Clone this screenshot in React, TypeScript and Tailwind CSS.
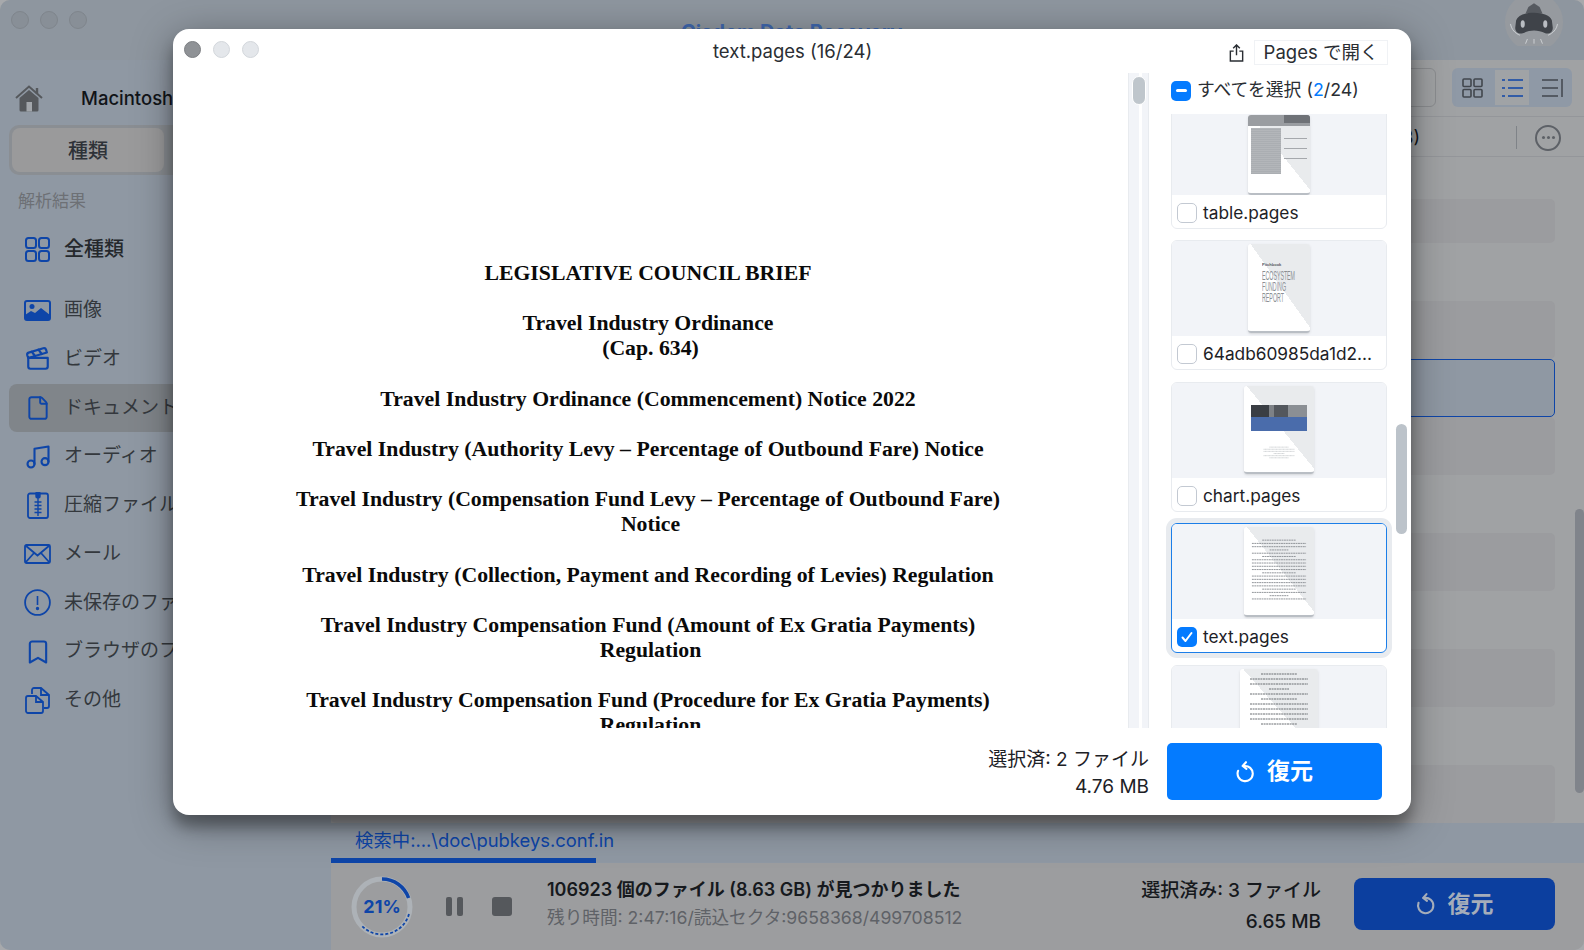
import React from 'react';
import { Clapperboard, File, Bookmark, Music } from 'lucide-react';

const sans = 'font-["Inter","Noto_Sans_CJK_JP",sans-serif]';
const iconCls = 'text-[#0e45a8]';

const HomeIcon = () => (
  <svg viewBox="0 0 28 27" className="w-[28px] h-[27px]">
    <path d="M1 13 14 1.5 27 13" fill="none" stroke="#55585c" strokeWidth="2" />
    <path d="M22 3v6" stroke="#55585c" strokeWidth="2.4" />
    <path d="M4.5 13 14 5l9.500 8v12a1.500 1.500 0 0 1-1.500 1.500H6A1.500 1.500 0 0 1 4.500 25Z" fill="#55585c" />
    <rect x="11.500" y="17" width="5.500" height="9.500" fill="#a2a6ab" />
  </svg>
);

const GridIcon = () => (
  <svg viewBox="0 0 25 25" className={`w-[25px] h-[25px] ${iconCls}`} fill="none" stroke="currentColor" strokeWidth="2">
    <rect x="1" y="1" width="10" height="10" rx="2.500" />
    <rect x="14" y="1" width="10" height="10" rx="2.500" />
    <rect x="1" y="14" width="10" height="10" rx="2.500" />
    <rect x="14" y="14" width="10" height="10" rx="2.500" />
  </svg>
);

const ImageIcon = () => (
  <svg viewBox="0 0 27 21" className={`w-[27px] h-[21px] ${iconCls}`}>
    <rect x="1" y="1" width="25" height="19" rx="2" fill="none" stroke="currentColor" strokeWidth="2" />
    <circle cx="8" cy="6.500" r="2.500" fill="currentColor" />
    <path d="M1 19v-4l6-4 4 2 6-5 9 7v5H1Z" fill="currentColor" />
  </svg>
);

const ZipIcon = () => (
  <svg viewBox="0 0 22 27" className={`w-[22px] h-[27px] ${iconCls}`} fill="none" stroke="currentColor" strokeWidth="1.800">
    <rect x="1" y="1.500" width="20" height="24.500" rx="2" />
    <rect x="9.200" y="0.500" width="3.600" height="5" rx="1" fill="currentColor" />
    <path d="M11 6v18M7.500 10h7M7.500 13.500h7M7.500 17h7M7.500 20.500h7" strokeWidth="1.400" />
  </svg>
);

const MailIcon = () => (
  <svg viewBox="0 0 27 20" className={`w-[27px] h-[20px] ${iconCls}`} fill="none" stroke="currentColor" strokeWidth="1.800">
    <rect x="1" y="1" width="25" height="18" rx="1.500" />
    <path d="m1.500 1.500 12 10 12-10M1.500 18.500l8.500-9.500M25.500 18.500 17 9" />
  </svg>
);

const AlertIcon = () => (
  <svg viewBox="0 0 27 27" className={`w-[27px] h-[27px] ${iconCls}`} fill="none" stroke="currentColor" strokeWidth="1.800">
    <circle cx="13.500" cy="13.500" r="12.400" />
    <path d="M13.500 7v9" strokeWidth="1.600" />
    <circle cx="13.500" cy="19.500" r="0.800" fill="currentColor" />
  </svg>
);

const OtherIcon = () => (
  <svg viewBox="0 0 25 27" className={`w-[25px] h-[27px] ${iconCls}`} fill="none" stroke="currentColor" strokeWidth="1.800">
    <path d="M7 7V3a2 2 0 0 1 2-2h7l8 7v11a2 2 0 0 1-2 2h-3" />
    <path d="M1 11a2 2 0 0 1 2-2h8l7 6v9a2 2 0 0 1-2 2H3a2 2 0 0 1-2-2Z" />
    <path d="M16 1v7h8M11 9v6h7" />
  </svg>
);

const UndoIcon = ({ className }: { className: string }) => (
  <svg viewBox="0 0 20 23" className={className} fill="none" stroke="currentColor" strokeWidth="2.200" strokeLinecap="round" strokeLinejoin="round">
    <path d="M8.500 5.200a8 8 0 1 1-6.300 5" />
    <path d="M10.500 1.200 7 5.200l4 3" />
  </svg>
);

const ShareIcon = () => (
  <svg viewBox="0 0 15 19" className="w-[15px] h-[18px] text-[#2a2e33]" fill="none" stroke="currentColor" strokeWidth="1.500">
    <path d="M4.500 7.500H1v10.500h13V7.500h-3.500M7.500 12V1.500M4 4.500l3.500-3.500 3.500 3.500" />
  </svg>
);

const Robot = () => (
  <svg viewBox="0 0 66 46" className="w-[62px] h-[46px]">
    <circle cx="33" cy="22" r="31" fill="#969a9f" />
    <path d="M24 13l3-7 6-4 6 4 3 7Z" fill="#565a60" />
    <path d="M14 20c2-5 9-8 19-8s17 3 19 8l1 8c0 5-4 7-8 6-4-2-8-3-12-3s-8 1-12 3c-4 1-8-1-8-6Z" fill="#3f4349" />
    <ellipse cx="21" cy="24" rx="2.200" ry="4" fill="#b9bdc2" />
    <ellipse cx="45" cy="24" rx="2.200" ry="4" fill="#b9bdc2" />
    <path d="M8 24c1 6 5 10 10 12M58 24c-1 6-5 10-10 12M26 40l-2 5M33 40v5M40 40l2 5" stroke="#cfd2d5" strokeWidth="1" fill="none" />
  </svg>
);

const navItems = [
  { icon: <ImageIcon />, label: '画像' },
  { icon: <Clapperboard className={`w-[26px] h-[26px] ${iconCls}`} strokeWidth={2} />, label: 'ビデオ' },
  { icon: <File className={`w-[26px] h-[28px] ${iconCls}`} strokeWidth={1.800} />, label: 'ドキュメント', active: true },
  { icon: <Music className={`w-[28px] h-[28px] ${iconCls}`} strokeWidth={1.800} />, label: 'オーディオ' },
  { icon: <ZipIcon />, label: '圧縮ファイル' },
  { icon: <MailIcon />, label: 'メール' },
  { icon: <AlertIcon />, label: '未保存のファイル' },
  { icon: <Bookmark className={`w-[28px] h-[28px] ${iconCls}`} strokeWidth={1.800} />, label: 'ブラウザのファイル' },
  { icon: <OtherIcon />, label: 'その他' },
];

const Sidebar = () => (
  <div className="w-[331px] shrink-0 bg-[#8f98a3] pl-[9px] flex flex-col overflow-hidden">
    <div className="flex items-center h-[36px] mt-[20px] pl-[6px] gap-[38px]">
      <HomeIcon />
      <span className="text-[18.500px] font-medium text-[#111418] leading-none whitespace-nowrap">Macintosh HD</span>
    </div>
    <div className="mt-[9px] w-[310px] h-[50px] rounded-[10px] bg-[#8a8e93] p-[3px] flex">
      <div className="w-[152px] pt-[1px] rounded-[8px] bg-[#9a9a9b] flex items-center justify-center text-[20px] font-medium text-[#2e3238]">種類</div>
    </div>
    <div className="mt-[14px] pl-[9px] text-[17px] leading-[24px] text-[#6d7075]">解析結果</div>
    <div className="mt-[12px] h-[48px] flex items-center pl-[16px] gap-[14px] text-[20px] font-medium text-[#25282c]">
      <GridIcon />
      <span>全種類</span>
    </div>
    <div className="mt-[13px] flex flex-col w-[310px]">
      {navItems.map((item) => (
        <div
          key={item.label}
          className={`h-[48.750px] flex items-center rounded-[8px] text-[19px] text-[#34383d] whitespace-nowrap ${item.active ? 'bg-[#80858a]' : ''}`}
        >
          <div className="w-[55px] flex justify-center pl-[2px]">{item.icon}</div>
          <span>{item.label}</span>
        </div>
      ))}
    </div>
  </div>
);

const viewGroup = (
  <div className="flex items-center w-[120px] h-[39px] bg-[#8f99a6] rounded-[6px] p-[2px]">
    <div className="w-[41px] flex pl-[8px]">
      <svg viewBox="0 0 21 20" className="w-[21px] h-[20px]" fill="none" stroke="#41464d" strokeWidth="1.600">
        <rect x="1" y="1" width="8" height="7.500" rx="1" />
        <rect x="12" y="1" width="8" height="7.500" rx="1" />
        <rect x="1" y="11.500" width="8" height="7.500" rx="1" />
        <rect x="12" y="11.500" width="8" height="7.500" rx="1" />
      </svg>
    </div>
    <div className="w-[34px] h-[35px] bg-[#a0a3a6] flex items-center justify-center">
      <svg viewBox="0 0 21 20" className="w-[21px] h-[20px]" fill="none" stroke="#0e45a8" strokeWidth="1.600">
        <path d="M0 2h3M6 2h15M0 10h3M6 10h15M0 18h3M6 18h15" />
      </svg>
    </div>
    <div className="w-[41px] flex pl-[13px]">
      <svg viewBox="0 0 21 20" className="w-[21px] h-[20px]" fill="none" stroke="#41464d" strokeWidth="1.500">
        <path d="M0 2h16M0 10h16M0 18h16M20 1v18" />
      </svg>
    </div>
  </div>
);

// list rows behind the dialog, only their right ends can be seen
const rows = [
  { h: 'h-[44px]', cls: 'bg-[#9b9c9f]' },
  { h: 'h-[58px]', cls: '' },
  { h: 'h-[58px]', cls: 'bg-[#9b9c9f]' },
  { h: 'h-[58px]', cls: 'bg-[#8f98a3] border border-[#0e45a8]' },
  { h: 'h-[58px]', cls: 'bg-[#9b9c9f]' },
  { h: 'h-[58px]', cls: '' },
  { h: 'h-[58px]', cls: 'bg-[#9b9c9f]' },
  { h: 'h-[58px]', cls: '' },
  { h: 'h-[58px]', cls: 'bg-[#9b9c9f]' },
  { h: 'h-[58px]', cls: '' },
  { h: 'h-[58px]', cls: 'bg-[#9b9c9f]' },
];

const Progress = () => (
  <div className="relative w-[66px] h-[66px] flex items-center justify-center">
    <svg viewBox="0 0 66 66" className="absolute inset-0 w-[66px] h-[66px]" fill="none">
      <circle cx="33" cy="33" r="28" stroke="#adb2b7" strokeWidth="5" />
      <path d="M33 5a28 28 0 0 1 26.600 19" stroke="#0e45a8" strokeWidth="3.500" />
      <path d="M60 40a28 28 0 0 1-47 12" stroke="#0e45a8" strokeWidth="1.800" strokeDasharray="3 2" />
    </svg>
    <span className="relative text-[18px] font-bold text-[#0e45a8]">21%</span>
  </div>
);

const Main = () => (
  <div className="flex-1 min-w-0 flex flex-col relative">
    <div className="h-[56px] flex justify-end pt-[8px] pr-[12px] gap-[16px] shrink-0">
      <div className="w-[200px] h-[39px] rounded-[6px] border border-[#8b8d90]" />
      {viewGroup}
    </div>
    <div className="h-[41px] pt-[2px] border-y border-[#94969a] flex items-center justify-end pr-[23px] shrink-0">
      <span className="text-[18px] text-[#111418] mr-[96px]">(3)</span>
      <div className="w-px h-[23px] bg-[#7f8388] mr-[18px]" />
      <div className="w-[26px] h-[26px] rounded-full border-2 border-[#5d6167] flex items-center justify-center gap-[2px]">
        <span className="w-[3px] h-[3px] bg-[#5d6167] rounded-full" />
        <span className="w-[3px] h-[3px] bg-[#5d6167] rounded-full" />
        <span className="w-[3px] h-[3px] bg-[#5d6167] rounded-full" />
      </div>
    </div>
    <div className="flex-1 pr-[29px] flex flex-col overflow-hidden">
      <div className="h-[42px] shrink-0" />
      {rows.map((r, i) => (
        <div key={i} className={`${r.h} ${r.cls} rounded-[5px] shrink-0`} />
      ))}
    </div>
    <div className="h-[40px] bg-[#8f98a3] shrink-0 flex items-end relative">
      <div className="absolute left-[24px] top-[5px] text-[18.400px] text-[#0e45a8] leading-[24px] whitespace-nowrap">検索中:...\doc\pubkeys.conf.in</div>
      <div className="w-[265px] h-[5px] bg-[#0e45a8]" />
    </div>
    <div className="h-[87px] bg-[#9c9d9f] shrink-0 flex items-center pl-[18px] pr-[29px]">
      <Progress />
      <div className="ml-[31px] flex gap-[5px]">
        <span className="w-[6px] h-[19px] rounded-[2px] bg-[#55585c]" />
        <span className="w-[6px] h-[19px] rounded-[2px] bg-[#55585c]" />
      </div>
      <span className="ml-[29px] w-[20px] h-[19px] rounded-[3px] bg-[#55585c]" />
      <div className="ml-[35px] -mt-[5px] flex flex-col gap-[6px]">
        <span className="text-[18px] leading-[22px] font-semibold text-[#16191d] whitespace-nowrap">106923 個のファイル (8.63 GB) が見つかりました</span>
        <span className="text-[17.650px] leading-[22px] text-[#5f6267] whitespace-nowrap">残り時間: 2:47:16/読込セクタ:9658368/499708512</span>
      </div>
      <div className="ml-auto flex flex-col items-end gap-[9px] mr-[33px]">
        <span className="text-[19px] leading-[22px] font-medium text-[#16191d] whitespace-nowrap">選択済み: 3 ファイル</span>
        <span className="text-[19px] leading-[22px] font-medium text-[#16191d]">6.65 MB</span>
      </div>
      <div className="w-[201px] h-[52px] -mt-[5px] rounded-[8px] bg-[#0c3f9f] flex items-center justify-center gap-[12px] text-[#a5adba]">
        <UndoIcon className="w-[20px] h-[22px]" />
        <span className="text-[23px] font-semibold">復元</span>
      </div>
    </div>
    <div className="absolute right-0 top-[449px] w-[9px] h-[284px] rounded-full bg-[#80848b]" />
  </div>
);

const docParagraphs = [
  ['LEGISLATIVE COUNCIL BRIEF'],
  ['Travel Industry Ordinance', '(Cap. 634)'],
  ['Travel Industry Ordinance (Commencement) Notice 2022'],
  ['Travel Industry (Authority Levy – Percentage of Outbound Fare) Notice'],
  ['Travel Industry (Compensation Fund Levy – Percentage of Outbound Fare)', 'Notice'],
  ['Travel Industry (Collection, Payment and Recording of Levies) Regulation'],
  ['Travel Industry Compensation Fund (Amount of Ex Gratia Payments)', 'Regulation'],
  ['Travel Industry Compensation Fund (Procedure for Ex Gratia Payments)', 'Regulation'],
];

const pageCls =
  'bg-[linear-gradient(to_top_right,#ffffff_52%,#e9ebed_52%)] border-b-2 border-[#b9bec4] rounded-[3px] shadow-sm overflow-hidden';

const TextLines = ({ count, gap, color }: { count: number; gap: number; color: string }) => (
  <svg viewBox={`0 0 60 ${count * gap}`} className="w-full" style={{ height: count * gap }}>
    {Array.from({ length: count }).map((_, i) => {
      const inset = i % 5 === 0 ? 12 : i % 7 === 3 ? 20 : 1;
      return <line key={i} x1={inset} x2={60 - inset} y1={i * gap + 1} y2={i * gap + 1} stroke={color} strokeWidth="1" strokeDasharray="2 0.600" />;
    })}
  </svg>
);

const TableThumb = () => (
  <div className={`w-[62px] h-[80px] ${pageCls} -mt-[2px]`}>
    <div className="h-[11px] bg-[#9a9da1] flex justify-end">
      <div className="w-[26px] h-[8px] bg-[#6f7277]" />
    </div>
    <div className="flex gap-[3px] px-[3px] pt-[2px]">
      <div className="w-[30px] h-[46px] bg-[repeating-linear-gradient(0deg,#8d9196_0px,#c8cbce_1px,#9ea1a5_2px)]" />
      <div className="flex-1 flex flex-col gap-[9px] pt-[10px]">
        <div className="h-px bg-[#a5a8ac]" />
        <div className="h-px bg-[#a5a8ac]" />
        <div className="h-px bg-[#a5a8ac]" />
      </div>
    </div>
  </div>
);

const FundingThumb = () => (
  <div className={`w-[62px] h-[89px] ${pageCls} pl-[14px] pt-[17px]`}>
    <svg viewBox="0 0 40 46" className="w-[40px] h-[46px]" fill="#8b8f94" fontFamily="Liberation Sans" fontSize="12">
      <text x="0" y="5" fontSize="4" fontWeight="bold" fill="#55595e">Pitchbook</text>
      <text x="0" y="19" textLength="33" lengthAdjust="spacingAndGlyphs">ECOSYSTEM</text>
      <text x="0" y="30" textLength="24" lengthAdjust="spacingAndGlyphs">FUNDING</text>
      <text x="0" y="41" textLength="22" lengthAdjust="spacingAndGlyphs">REPORT</text>
    </svg>
  </div>
);

const ChartThumb = () => (
  <div className={`w-[70px] h-[88px] ${pageCls} pt-[19px] px-[7px]`}>
    <div className="h-[12px] flex">
      <div className="w-[18px] bg-[#3a3e44]" />
      <div className="w-[5px] bg-[#7d8186]" />
      <div className="w-[14px] bg-[#53575d]" />
      <div className="flex-1 bg-[#8b8f94]" />
    </div>
    <div className="h-[14px] bg-[#4a6cab]" />
    <div className="mt-[10px] px-[12px]">
      <TextLines count={6} gap={4} color="#a9adb2" />
    </div>
  </div>
);

const cards = [
  { name: 'table.pages', thumb: <TableThumb />, align: 'items-end' },
  { name: '64adb60985da1d2...', thumb: <FundingThumb />, align: 'items-center' },
  { name: 'chart.pages', thumb: <ChartThumb />, align: 'items-center' },
  {
    name: 'text.pages',
    selected: true,
    align: 'items-center',
    thumb: (
      <div className={`w-[70px] h-[90px] ${pageCls} px-[7px] pt-[10px]`}>
        <TextLines count={19} gap={3.5} color="#8a8e93" />
      </div>
    ),
  },
  {
    name: 'other.pages',
    align: 'items-start',
    thumb: (
      <div className={`w-[78px] h-[90px] mt-[3px] ${pageCls} px-[6px] pt-[4px]`}>
        <TextLines count={16} gap={5} color="#6a6e73" />
      </div>
    ),
  },
];

const Card = ({ name, thumb, selected, align }: { name: string; thumb: React.ReactNode; selected?: boolean; align: string }) => (
  <div
    className={`h-[130px] shrink-0 rounded-[6px] border overflow-hidden flex flex-col ${
      selected ? 'border-[#1c7ee8] ring-[5px] ring-[#e8ebef]' : 'border-[#e8ebef]'
    }`}
  >
    <div className={`h-[95px] shrink-0 bg-[#f2f4f8] flex justify-center overflow-hidden ${align}`}>{thumb}</div>
    <div className="flex-1 flex items-center pl-[5px] pt-[3px] gap-[6px]">
      {selected ? (
        <div className="w-[20px] h-[20px] rounded-[5px] bg-[#047bff] flex items-center justify-center">
          <svg viewBox="0 0 14 14" className="w-[14px] h-[14px]" fill="none" stroke="#fff" strokeWidth="2" strokeLinecap="round" strokeLinejoin="round">
            <path d="m2.500 7.500 3 3.500 6-8" />
          </svg>
        </div>
      ) : (
        <div className="w-[20px] h-[20px] rounded-[5px] border border-[#c3c9d2] bg-white" />
      )}
      <span className="text-[17.300px] text-[#1d2126] whitespace-nowrap">{name}</span>
    </div>
  </div>
);

const Dialog = () => (
  <div className="absolute left-[173px] top-[29px] w-[1238px] h-[786px] bg-white rounded-[16px] shadow-[0_12px_14px_rgba(0,0,0,0.3),0_8px_40px_rgba(0,0,0,0.36)] flex flex-col overflow-hidden">
    <div className="h-[44px] shrink-0 relative flex items-center">
      <div className="flex gap-[12px] pl-[11px] -mt-[4px]">
        <span className="w-[17px] h-[17px] rounded-full bg-[#8f9296] border border-[#7c7f83]" />
        <span className="w-[17px] h-[17px] rounded-full bg-[#e4e7eb] border border-[#d2d6db]" />
        <span className="w-[17px] h-[17px] rounded-full bg-[#e4e7eb] border border-[#d2d6db]" />
      </div>
      <div className="absolute left-[540px] top-[10px] text-[18.500px] leading-[24px] text-[#2a2e33] whitespace-nowrap">text.pages (16/24)</div>
      <div className="ml-auto flex items-center gap-[10px] pr-[23px] pt-[3px]">
        <ShareIcon />
        <div className="w-[134px] h-[25px] border border-[#f0f2f5] flex items-center justify-center text-[18.500px] text-[#2a2e33] whitespace-nowrap">Pages で開く</div>
      </div>
    </div>
    <div className="flex-1 min-h-0 flex">
      <div className="w-[955px] shrink-0 pt-[188px] overflow-hidden text-center text-[21.750px] leading-[25.140px] font-bold text-[#0a0a0a] font-['Liberation_Serif',serif]">
        {docParagraphs.map((p, i) => (
          <div key={i} className="mb-[25.140px]">
            {p.map((l, j) => (
              <div key={l} className={`whitespace-nowrap ${j === 0 ? 'pr-[5px]' : ''}`}>{l}</div>
            ))}
          </div>
        ))}
      </div>
      <div className="w-[21px] shrink-0 relative bg-[#f2f4f8] border-x border-[#e8ebef] flex justify-center">
        <div className="w-[3px] bg-white ml-[3px]" />
        <div className="absolute left-[3px] top-[3px] w-[14px] h-[29px] rounded-full bg-[#bfc6cc] border border-white" />
      </div>
      <div className="flex-1 min-w-0 flex flex-col relative">
        <div className="h-[41px] pb-[6px] shrink-0 flex items-center pl-[22px] gap-[6px] text-[17.800px] text-[#2a2e33] z-10 bg-white">
          <div className="w-[20px] h-[20px] rounded-[5px] bg-[#047bff] flex items-center justify-center">
            <span className="w-[11px] h-[3px] rounded-full bg-white" />
          </div>
          <span>すべてを選択 (<span className="text-[#047bff]">2</span>/24)</span>
        </div>
        <div className="flex-1 min-h-0 flex flex-col gap-[11.5px] pl-[22px] pr-[24px] -mt-[15.500px] overflow-hidden">
          {cards.map((c) => (
            <Card key={c.name} {...c} />
          ))}
        </div>
        <div className="absolute right-[4px] top-[351px] w-[11px] h-[110px] rounded-full bg-[#bcc3ca]" />
      </div>
    </div>
    <div className="h-[87px] shrink-0 flex items-center justify-end pr-[29px] gap-[18px]">
      <div className="flex flex-col items-end pt-[2px] text-[19px] leading-[27px] text-[#1d2126]">
        <span className="whitespace-nowrap">選択済: 2 ファイル</span>
        <span>4.76 MB</span>
      </div>
      <div className="w-[215px] h-[57px] rounded-[5px] bg-[#047bff] flex items-center justify-center gap-[12px] text-white">
        <UndoIcon className="w-[19px] h-[22px]" />
        <span className="text-[23px] font-semibold">復元</span>
      </div>
    </div>
  </div>
);

export default function App() {
  return (
    <div className={`relative w-[1584px] h-[950px] overflow-hidden bg-[#a7a9ac] ${sans}`}>
      <div className="h-full rounded-[10px] overflow-hidden bg-[#a0a2a4] flex flex-col">
        <div className="h-[60px] shrink-0 bg-[#8e969f] relative flex items-start pl-[11px] pt-[11px] gap-[11px]">
          <span className="w-[18px] h-[18px] rounded-full bg-[#888f97] border border-[#7f858c]" />
          <span className="w-[18px] h-[18px] rounded-full bg-[#888f97] border border-[#7f858c]" />
          <span className="w-[18px] h-[18px] rounded-full bg-[#888f97] border border-[#7f858c]" />
          <div className="absolute left-[681px] top-[17px] text-[20px] font-bold text-[#3f67ad] whitespace-nowrap">Cisdem Data Recovery</div>
          <div className="absolute right-[19px] top-0">
            <Robot />
          </div>
        </div>
        <div className="flex-1 min-h-0 flex">
          <Sidebar />
          <Main />
        </div>
      </div>
      <Dialog />
    </div>
  );
}
